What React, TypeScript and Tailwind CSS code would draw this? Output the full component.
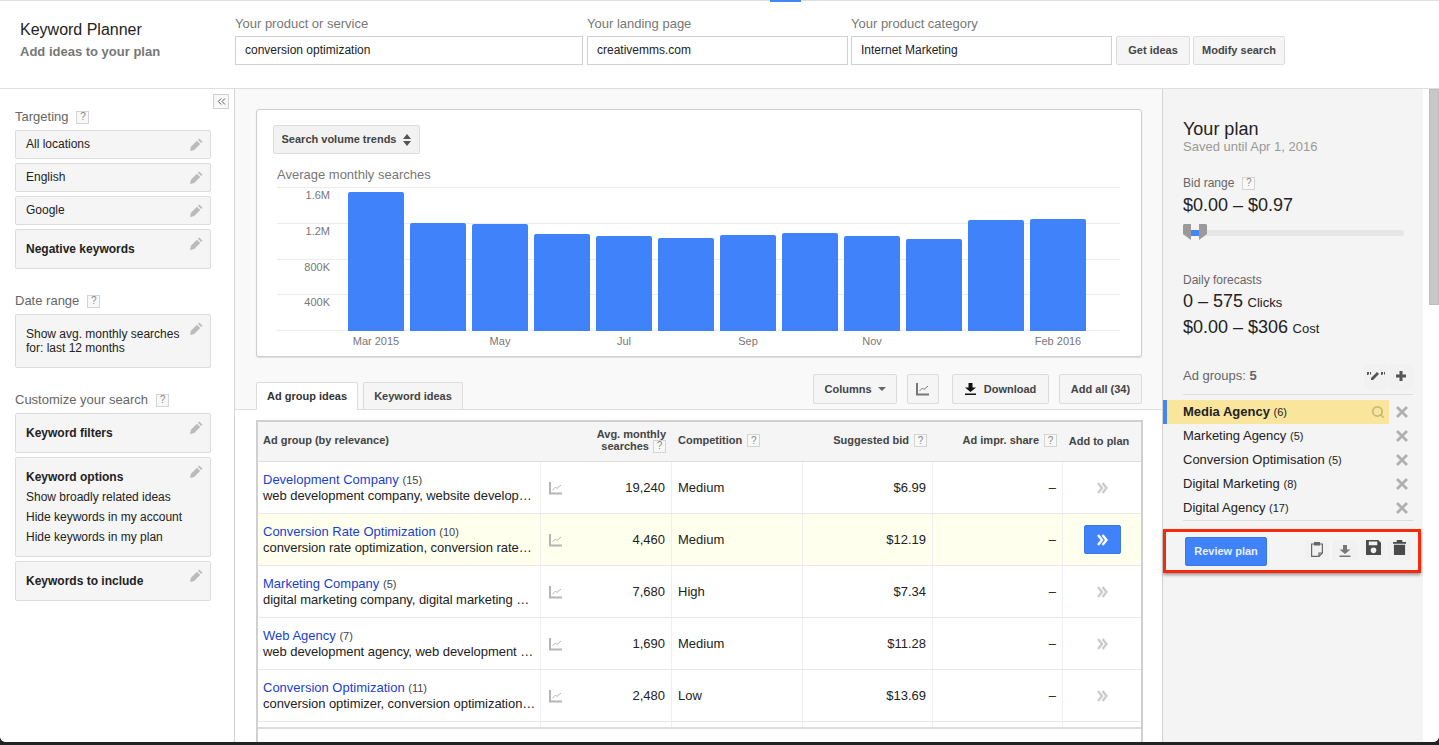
import type { ReactNode } from "react";
import { ChevronsLeft, Search } from "lucide-react";

const bars = [139, 108, 107, 97, 95, 93, 96, 98, 95, 92, 111, 112];

const rows = [
  { name: "Development Company", count: 15, kw: "web development company, website develop…", vol: "19,240", comp: "Medium", bid: "$6.99" },
  { name: "Conversion Rate Optimization", count: 10, kw: "conversion rate optimization, conversion rate…", vol: "4,460", comp: "Medium", bid: "$12.19", active: true },
  { name: "Marketing Company", count: 5, kw: "digital marketing company, digital marketing …", vol: "7,680", comp: "High", bid: "$7.34" },
  { name: "Web Agency", count: 7, kw: "web development agency, web development …", vol: "1,690", comp: "Medium", bid: "$11.28" },
  { name: "Conversion Optimization", count: 11, kw: "conversion optimizer, conversion optimization…", vol: "2,480", comp: "Low", bid: "$13.69" },
];

const groups = [
  { name: "Marketing Agency", count: 5 },
  { name: "Conversion Optimisation", count: 5 },
  { name: "Digital Marketing", count: 8 },
  { name: "Digital Agency", count: 17 },
];

function Help() {
  return (
    <span className="inline-flex h-[13px] w-[13px] items-center justify-center border border-[#d4d4d4] bg-[#f8f8f8] text-[10px] leading-none font-normal text-[#888]">
      ?
    </span>
  );
}

function TrendIcon({ color = "#b5b5b5" }: { color?: string }) {
  return (
    <svg width="14" height="14" viewBox="0 0 14 14" fill="none">
      <path d="M1 1v11.5h12" stroke={color} strokeWidth="2" />
      <path d="M3.5 9l3-3 1.5 1.5L12 4" stroke={color} strokeWidth="1" />
    </svg>
  );
}

function DoubleChevron({ color }: { color: string }) {
  return (
    <svg width="11" height="12" viewBox="0 0 11 12" fill="none" stroke={color} strokeWidth="2.4">
      <path d="M1 1l4 5-4 5" />
      <path d="M5.5 1l4 5-4 5" />
    </svg>
  );
}

function PencilIcon() {
  return (
    <svg width="13" height="13" viewBox="0 0 14 14" fill="#bbb" className="absolute top-[7px] right-[7px]">
      <path d="M10 .5L13.5 4 12 5.5 8.5 2zM7.5 3L11 6.5 4.5 13 0 14l1-4.5z" />
    </svg>
  );
}

function CloseIcon({ className = "" }: { className?: string }) {
  return (
    <svg width="12" height="12" viewBox="0 0 12 12" fill="none" stroke="#b0b0b0" strokeWidth="2.8" className={className}>
      <path d="M1 1l10 10M11 1L1 11" />
    </svg>
  );
}

function SideBox({ children, className = "" }: { children: ReactNode; className?: string }) {
  return (
    <div className={`relative rounded-[2px] border border-[#dcdcdc] bg-[#f5f5f5] pl-[10px] text-[12px] text-[#222] ${className}`}>
      {children}
      <PencilIcon />
    </div>
  );
}

function Field({ label, value, className }: { label: string; value: string; className: string }) {
  return (
    <div className={className}>
      <div className="mb-[5px] text-[13px] leading-[15px] text-[#777]">{label}</div>
      <div className="flex h-[29px] items-center border border-[#d0d0d0] bg-white pb-[2px] pl-[9px] text-[12px] text-[#222]">{value}</div>
    </div>
  );
}

function GrayButton({ children, className = "" }: { children: ReactNode; className?: string }) {
  return (
    <div className={`flex items-center justify-center rounded-[2px] border border-[#dcdcdc] bg-[#f5f5f5] text-[11px] font-bold text-[#444] ${className}`}>
      {children}
    </div>
  );
}

function IconSlot({ children, className = "" }: { children: ReactNode; className?: string }) {
  return <div className={`flex w-[24px] justify-center rounded-[2px] bg-[#f1f1f1] ${className}`}>{children}</div>;
}

export default function App() {
  return (
    <div className="flex h-[745px] w-[1439px] flex-col overflow-hidden bg-[#222] font-['Liberation_Sans',Arial,sans-serif]">
      <div className="flex h-[742px] flex-col overflow-hidden rounded-b-[6px] bg-white">
        {/* top bar */}
        <header className="relative flex h-[89px] shrink-0 border-t border-b border-[#dedede] bg-white pt-[15px]">
          <div className="absolute top-[-1px] left-[770px] h-[2px] w-[31px] bg-[#4285f4]" />
          <div className="w-[235px] pt-[4px] pl-[20px]">
            <div className="text-[16px] leading-[20px] text-[#222]">Keyword Planner</div>
            <div className="mt-[4px] text-[13px] leading-[16px] font-bold text-[#777]">Add ideas to your plan</div>
          </div>
          <div className="flex items-end gap-1 self-start">
            <Field label="Your product or service" value="conversion optimization" className="w-[348px]" />
            <Field label="Your landing page" value="creativemms.com" className="w-[261px]" />
            <Field label="Your product category" value="Internet Marketing" className="-ml-px w-[261px]" />
            <GrayButton className="h-[29px] w-[74px]">Get ideas</GrayButton>
            <GrayButton className="-ml-px h-[29px] w-[92px]">Modify search</GrayButton>
          </div>
        </header>

        <div className="flex min-h-0 flex-1">
          {/* left sidebar */}
          <aside className="relative w-[235px] shrink-0 border-r border-[#d4d4d4] bg-white pt-[20px] pr-[23px] pl-[15px]">
            <div className="absolute top-[5px] right-[5px] flex h-[15px] w-[16px] items-center justify-center border border-[#d0d0d0] bg-[#f8f8f8]">
              <ChevronsLeft size={13} strokeWidth={1.75} className="text-[#555]" />
            </div>
            <div className="flex items-center gap-2 text-[13px] leading-[16px] text-[#666]">
              Targeting <Help />
            </div>
            <div className="mt-[5px] flex flex-col gap-[4px]">
              <SideBox className="flex h-[29px] items-center pb-[2px]">All locations</SideBox>
              <SideBox className="flex h-[29px] items-center pb-[2px]">English</SideBox>
              <SideBox className="flex h-[29px] items-center pb-[2px]">Google</SideBox>
              <SideBox className="flex h-[40px] items-center font-bold">Negative keywords</SideBox>
            </div>
            <div className="mt-[24px] flex items-center gap-2 text-[13px] leading-[16px] text-[#666]">
              Date range <Help />
            </div>
            <div className="mt-[5px]">
              <SideBox className="h-[54px] pt-[12px] leading-[14px]">
                Show avg. monthly searches
                <br />
                for: last 12 months
              </SideBox>
            </div>
            <div className="mt-[24px] flex items-center gap-2 text-[13px] leading-[16px] text-[#666]">
              Customize your search <Help />
            </div>
            <div className="mt-[5px] flex flex-col gap-[4px]">
              <SideBox className="flex h-[40px] items-center font-bold">Keyword filters</SideBox>
              <SideBox className="h-[100px] pt-[9px] leading-[20px]">
                <div className="font-bold">Keyword options</div>
                <div>Show broadly related ideas</div>
                <div>Hide keywords in my account</div>
                <div>Hide keywords in my plan</div>
              </SideBox>
              <SideBox className="flex h-[40px] items-center font-bold">Keywords to include</SideBox>
            </div>
          </aside>

          {/* main column */}
          <main className="flex min-w-0 flex-1 flex-col overflow-hidden bg-white">
            <div className="shrink-0 border-b border-[#dedede] bg-[#f9f9f9] pt-[20px]">
              <div className="mr-[20px] ml-[21px] h-[248px] rounded-[3px] border border-[#cfcfcf] bg-white px-[16px] pt-[15px] shadow-[0_1px_1px_#ddd]">
                <div className="flex h-[29px] w-[147px] items-center justify-center gap-[7px] rounded-[2px] border border-[#dcdcdc] bg-[#f2f2f2] text-[11px] font-bold text-[#444]">
                  Search volume trends
                  <svg width="8" height="12" viewBox="0 0 8 12" fill="#555">
                    <path d="M4 0l4 5H0zM4 12L0 7h8z" />
                  </svg>
                </div>
                <div className="mt-[13px] pl-[4px] text-[13px] leading-[15px] text-[#777]">Average monthly searches</div>
                <div className="relative mt-[5px] ml-[4px] w-[843px]">
                  <div className="flex h-[144px] flex-col justify-between">
                    {["1.6M", "1.2M", "800K", "400K", ""].map((t) => (
                      <div key={t} className="h-0 border-t border-[#ececec]">
                        <div className="w-[53px] pt-[1px] text-right text-[11px] leading-[13px] text-[#777]">{t}</div>
                      </div>
                    ))}
                  </div>
                  <div className="absolute top-0 left-[71px] flex h-[144px] items-end gap-[6px]">
                    {bars.map((h, i) => (
                      <div key={i} className="w-[56px] rounded-t-[2px] bg-[#3f82fa]" style={{ height: h }} />
                    ))}
                  </div>
                  <div className="mt-[4px] ml-[71px] flex gap-[6px] text-[11px] leading-[13px] text-[#777]">
                    {["Mar 2015", "", "May", "", "Jul", "", "Sep", "", "Nov", "", "", "Feb 2016"].map((t, i) => (
                      <div key={i} className="w-[56px] text-center whitespace-nowrap">{t}</div>
                    ))}
                  </div>
                </div>
              </div>

              {/* tabs and toolbar */}
              <div className="mt-[17px] mr-[20px] ml-[21px] flex h-[35px] items-end">
                <div className="z-10 -mb-px flex h-[28px] w-[102px] items-center justify-center rounded-t-[2px] border border-b-0 border-[#dcdcdc] bg-white pb-[1px] text-[11px] font-bold text-[#333]">
                  Ad group ideas
                </div>
                <div className="ml-[5px] flex h-[27px] w-[100px] items-center justify-center rounded-t-[2px] border border-b-0 border-[#dcdcdc] bg-[#f5f5f5] text-[11px] font-bold text-[#444]">
                  Keyword ideas
                </div>
                <div className="ml-auto flex self-start">
                  <GrayButton className="h-[30px] w-[84px] gap-[6px]">
                    Columns
                    <span className="h-0 w-0 border-x-[4px] border-t-[4px] border-x-transparent border-t-[#666]" />
                  </GrayButton>
                  <GrayButton className="ml-[10px] h-[30px] w-[32px]">
                    <TrendIcon color="#777" />
                  </GrayButton>
                  <GrayButton className="ml-[13px] h-[30px] w-[97px] gap-[8px]">
                    <svg width="11" height="12" viewBox="0 0 11 12" fill="#111">
                      <path d="M3.5 0h4v4.5H11L5.5 9 0 4.5h3.5zM0 10.5h11V12H0z" />
                    </svg>
                    Download
                  </GrayButton>
                  <GrayButton className="ml-[10px] h-[30px] w-[83px]">Add all (34)</GrayButton>
                </div>
              </div>
            </div>

            {/* ideas table */}
            <div className="mt-[10px] mr-[19px] ml-[21px] flex-1 border-x-2 border-t-2 border-[#d0d0d0] text-[12px] text-[#222]">
              <div className="flex h-[40px] border-b border-[#dedede] bg-[#f5f5f5] text-[11px] font-bold text-[#444]">
                <div className="flex w-[283px] items-center pb-[2px] pl-[5px]">Ad group (by relevance)</div>
                <div className="flex w-[131px] flex-col items-end justify-center pr-[6px] pb-[3px] text-right leading-[12px]">
                  <div>Avg. monthly</div>
                  <div className="flex items-center gap-1">searches <Help /></div>
                </div>
                <div className="flex w-[131px] items-center gap-[5px] pb-[2px] pl-[6px]">Competition <Help /></div>
                <div className="flex w-[130px] items-center justify-end gap-[5px] pr-[6px] pb-[2px]">Suggested bid <Help /></div>
                <div className="flex w-[130px] items-center justify-end gap-[5px] pr-[6px] pb-[2px]">Ad impr. share <Help /></div>
                <div className="flex flex-1 items-center justify-center pr-[6px]">Add to plan</div>
              </div>
              {rows.map((r) => (
                <div key={r.name} className={`flex h-[52px] border-b border-[#e8e8e8] ${r.active ? "bg-[#ffffee]" : "bg-white"}`}>
                  <div className="w-[283px] overflow-hidden border-r border-[#efefef] pt-[10px] pl-[5px] leading-[15px]">
                    <div className="text-[13px] text-[#1a3fd0]">
                      {r.name} <span className="text-[11px] text-[#444]">({r.count})</span>
                    </div>
                    <div className="text-[13px] tracking-[-0.05px] whitespace-nowrap">{r.kw}</div>
                  </div>
                  <div className="flex w-[131px] items-center justify-between border-r border-[#efefef] pr-[6px] pl-[8px] text-[13px]">
                    <TrendIcon />
                    {r.vol}
                  </div>
                  <div className="flex w-[131px] items-center border-r border-[#efefef] pl-[6px] text-[13px]">{r.comp}</div>
                  <div className="flex w-[130px] items-center justify-end border-r border-[#efefef] pr-[6px] text-[13px]">{r.bid}</div>
                  <div className="flex w-[130px] items-center justify-end border-r border-[#efefef] pr-[6px] text-[13px]">–</div>
                  <div className="flex flex-1 items-center justify-center">
                    {r.active ? (
                      <div className="flex h-[29px] w-[37px] items-center justify-center rounded-[2px] border border-[#3b78e7] bg-[#3f82fa]">
                        <DoubleChevron color="#fff" />
                      </div>
                    ) : (
                      <DoubleChevron color="#ccc" />
                    )}
                  </div>
                </div>
              ))}
              <div className="flex h-[7px] border-b-2 border-[#ddd] bg-white">
                <div className="w-[283px] border-r border-[#efefef]" />
                <div className="w-[131px] border-r border-[#efefef]" />
                <div className="w-[131px] border-r border-[#efefef]" />
                <div className="w-[130px] border-r border-[#efefef]" />
                <div className="w-[130px] border-r border-[#efefef]" />
              </div>
            </div>
          </main>

          {/* your plan */}
          <aside className="w-[261px] shrink-0 border-l border-[#d4d4d4] bg-[#f4f4f4] pt-[30px] text-[#222]">
            <div className="pl-[20px]">
              <div className="text-[18px] leading-[20px]">Your plan</div>
              <div className="text-[13px] leading-[16px] text-[#999]">Saved until Apr 1, 2016</div>
              <div className="mt-[20px] flex items-center gap-2 text-[12px] leading-[16px] text-[#666]">Bid range <Help /></div>
              <div className="mt-[3px] text-[18px] leading-[22px]">$0.00 – $0.97</div>
              <div className="relative mt-[8px] h-[16px] w-[221px]">
                <div className="absolute top-[6px] h-[6px] w-full rounded-[2px] bg-[#e6e6e6]" />
                <div className="absolute top-[6px] left-[6px] h-[6px] w-[12px] bg-[#4285f4]" />
                <svg width="24" height="16" viewBox="0 0 24 16" className="absolute top-0 left-0" fill="#9a9a9a">
                  <path d="M1 0h7v16L0 10V1zM16 0h7l1 1v9l-8 6z" />
                </svg>
              </div>
              <div className="mt-[32px] text-[12px] leading-[16px] text-[#666]">Daily forecasts</div>
              <div className="mt-[1px] leading-[24px]">
                <span className="text-[18px]">0 – 575</span> <span className="text-[13px]">Clicks</span>
              </div>
              <div className="leading-[24px]">
                <span className="text-[18px]">$0.00 – $306</span> <span className="text-[13px]">Cost</span>
              </div>
            </div>

            <div className="mt-[22px] mr-[10px] ml-[20px] flex h-[32px] items-center justify-between border-b border-[#dedede] pb-[5px] text-[13px] text-[#666]">
              <div>Ad groups: <b>5</b></div>
              <div className="flex items-center gap-px">
                <IconSlot className="h-[25px] items-center">
                  <svg width="20" height="10" viewBox="0 0 20 10" fill="#555">
                    <path d="M5 7l6-6 2 2-6 6H5zM1 1h2v2l-1 1H1zM4 1h1v2l-1 1zM15 1h2v2l-1 1h-1zM18 1h1v2l-1 1z" />
                  </svg>
                </IconSlot>
                <IconSlot className="h-[25px] items-center">
                  <svg width="10" height="10" viewBox="0 0 10 10" fill="#555">
                    <path d="M3.5 0h3v3.5H10v3H6.5V10h-3V6.5H0v-3h3.5z" />
                  </svg>
                </IconSlot>
              </div>
            </div>

            <div className="mt-[5px] flex h-[24px] items-center">
              <div className="flex h-[24px] w-[226px] items-center justify-between border-l-[4px] border-[#4285f4] bg-[#f9e69c] pr-[4px] pl-[16px] text-[13px] font-bold">
                <span>Media Agency <span className="text-[11px] font-normal">(6)</span></span>
                <Search size={14} strokeWidth={3} className="text-[#c9b979]" />
              </div>
              <CloseIcon className="ml-[7px]" />
            </div>
            {groups.map((g) => (
              <div key={g.name} className="flex h-[24px] items-center">
                <div className="w-[230px] pl-[20px] text-[13px]">
                  {g.name} <span className="text-[11px]">({g.count})</span>
                </div>
                <CloseIcon className="ml-[3px]" />
              </div>
            ))}
            <div className="mr-[10px] ml-[20px] border-t border-[#dedede]" />

            <div className="mt-[8px] flex h-[44px] w-[258px] items-center justify-between border-[3px] border-[#f52a0a] pr-[7px] pl-[19px] shadow-[0_2px_3px_#999]">
              <div className="flex h-[29px] w-[82px] items-center justify-center rounded-[2px] border border-[#3b78e7] bg-[#3f82fa] text-[11px] font-bold text-[#e8f0fe]">
                Review plan
              </div>
              <div className="mb-[2px] flex items-start">
                <IconSlot className="h-[20px] pt-[1px]">
                  <svg width="12" height="16" viewBox="0 0 12 16" fill="none" stroke="#666" strokeWidth="1.2">
                    <path d="M.6 3h10.8v9l-3.4 3.4H.6zM8 15v-3h3" />
                    <path d="M3.5 4V1.5h5V4z" fill="#666" />
                  </svg>
                </IconSlot>
                <IconSlot className="ml-[4px] h-[20px] pt-[5px]">
                  <svg width="12" height="12" viewBox="0 0 11 12" fill="#777">
                    <path d="M3.5 0h4v4.5H11L5.5 9 0 4.5h3.5zM0 10.5h11V12H0z" />
                  </svg>
                </IconSlot>
                <IconSlot className="ml-[4px] h-[20px]">
                  <svg width="15" height="15" viewBox="0 0 16 16" fill="#4a4a4a">
                    <path fillRule="evenodd" d="M0 0h13l3 3v13H0zM3 1.5v4h9v-4zM8 8a3 3 0 100 6 3 3 0 000-6z" />
                  </svg>
                </IconSlot>
                <IconSlot className="ml-[2px] h-[20px]">
                  <svg width="13" height="15" viewBox="0 0 14 16" fill="#4a4a4a">
                    <path d="M0 2h4V0h6v2h4v2H0zM1 5h12v11H1z" />
                  </svg>
                </IconSlot>
              </div>
            </div>
          </aside>

          {/* scrollbar */}
          <div className="w-[16px] shrink-0 bg-white">
            <div className="ml-[6px] h-[216px] w-[10px] border border-[#bdbdbd] bg-[#c8c8c8]" />
          </div>
        </div>
      </div>
    </div>
  );
}
